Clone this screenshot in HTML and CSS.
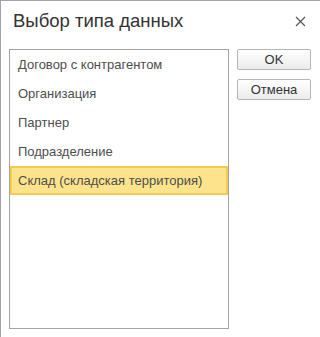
FILE: index.html
```html
<!DOCTYPE html>
<html lang="ru">
<head>
  <meta charset="UTF-8">
  <title>Выбор типа данных</title>
  <link rel="stylesheet" href="styles.css">
</head>
<body>
  <div class="window">
    <div class="title-bar">
      <h1 class="title">Выбор типа данных</h1>
      <span class="close">
        <svg width="11" height="11" viewBox="0 0 11 11"><path d="M1 1L10 10M10 1L1 10" stroke="#555" stroke-width="1.2"/></svg>
      </span>
    </div>
    <div class="content">
      <ul class="type-list">
        <li class="item">Договор с контрагентом</li>
        <li class="item">Организация</li>
        <li class="item">Партнер</li>
        <li class="item">Подразделение</li>
        <li class="item selected">Склад (складская территория)</li>
      </ul>
      <div class="buttons">
        <button class="btn">OK</button>
        <button class="btn">Отмена</button>
      </div>
    </div>
  </div>
</body>
</html>
```

FILE: styles.css
```css
html, body {
  margin: 0;
  padding: 0;
  background: #fff;
}

body {
  font-family: Arial, "Liberation Sans", sans-serif;
  color: #333;
}

.window {
  width: 320px;
  height: 337px;
  box-sizing: border-box;
  border-top: 1px solid #a3a3a3;
  border-left: 1px solid #a3a3a3;
}

.title-bar {
  display: flex;
  align-items: center;
  justify-content: space-between;
  height: 40px;
  padding: 0 14px 0 12px;
}

.title {
  margin: 0;
  font-size: 18.5px;
  font-weight: normal;
  color: #333;
}

.close {
  display: flex;
}

.content {
  display: flex;
  padding: 8px 8px 0 8px;
}

.type-list {
  list-style: none;
  margin: 0;
  padding: 0;
  width: 218px;
  height: 278px;
  border: 1px solid #a3a3a3;
}

.item {
  height: 29px;
  line-height: 29px;
  padding-left: 8px;
  font-size: 13px;
  color: #4d4d4d;
  box-sizing: border-box;
}

.item.selected {
  background: #fde48c;
  border: 2px solid #f3cb4f;
  line-height: 25px;
  padding-left: 6px;
}

.buttons {
  display: flex;
  flex-direction: column;
  gap: 9px;
  margin-left: 8px;
}

.btn {
  width: 74px;
  height: 21px;
  padding: 0;
  font-family: Arial, "Liberation Sans", sans-serif;
  font-size: 13px;
  color: #333;
  background: linear-gradient(#ffffff, #ececec);
  border: 1px solid #b5b5b5;
  border-radius: 2px;
}
```
